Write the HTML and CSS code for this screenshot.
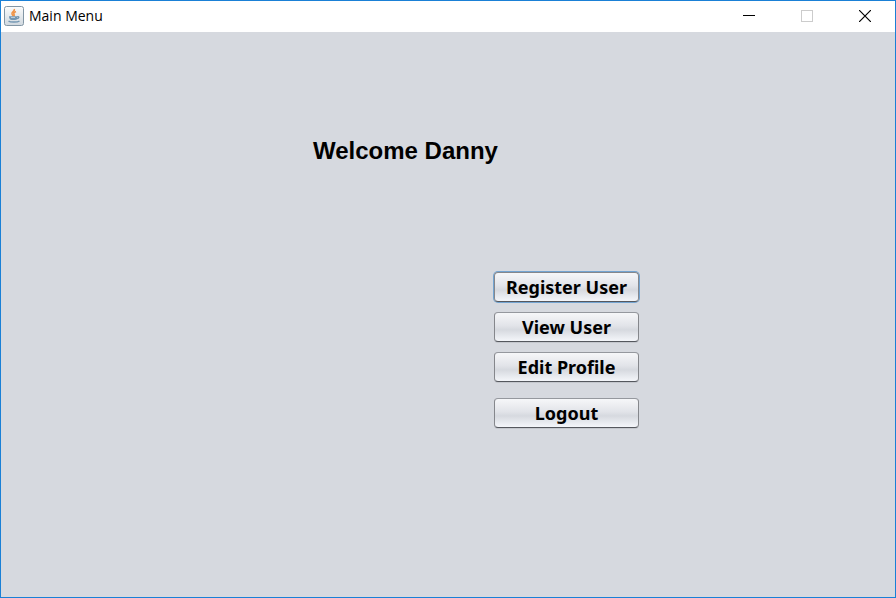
FILE: index.html
```html
<!DOCTYPE html>
<html lang="en">
<head>
<meta charset="utf-8">
<title>Main Menu</title>
<link rel="stylesheet" href="styles.css">
</head>
<body>
<div class="window">
  <header class="titlebar">
    <svg class="app-icon" width="20" height="20" viewBox="0 0 20 20" aria-hidden="true">
      <defs>
        <linearGradient id="tile" x1="0" y1="0" x2="0" y2="1">
          <stop offset="0" stop-color="#fbfcfc"/>
          <stop offset="1" stop-color="#d0d8df"/>
        </linearGradient>
      </defs>
      <rect x=".5" y=".5" width="19" height="19" rx="2" fill="url(#tile)" stroke="#8296a5"/>
      <path d="M10.300 3c.8 2-2.800 3-2.300 4.800.2.9 1 1.500 1.300 2.200M12 5.500c-1.800.8-2.700 1.700-2 2.700.5.7.3 1.300-.3 1.900" fill="none" stroke="#ef9448" stroke-width="1.600"/>
      <path d="M5 10.300h8.500c0 2.200-.8 3.700-2.200 3.700H7.700C6 14 5 12.500 5 10.300z" fill="#7396b2"/>
      <path d="M13.300 10.700c2.200-.6 2.400 1.700-.9 2.300" fill="none" stroke="#6b8fac" stroke-width="1.200"/>
      <path d="M4.500 15c1.500 1.300 9 1.500 11 0" fill="none" stroke="#7396b2" stroke-width="1.400"/>
      <path d="M7 11.500h4" stroke="#b5cbdb"/>
    </svg>
    <span class="title">Main Menu</span>
    <button class="control" type="button" aria-label="Minimize"><svg width="12" height="12" shape-rendering="crispEdges"><path d="M0 5.500h12" stroke="#000"/></svg></button>
    <button class="control" type="button" aria-label="Maximize" disabled><svg width="12" height="12" shape-rendering="crispEdges"><path d="M.5.5h11v11H.5z" fill="none" stroke="#ccc"/></svg></button>
    <button class="control" type="button" aria-label="Close"><svg width="12" height="12"><path d="M0 0l12 12M12 0L0 12" stroke="#000" stroke-width="1.200"/></svg></button>
  </header>
  <main class="content">
    <h1 class="welcome">Welcome Danny</h1>
    <nav class="menu">
      <button class="action focused" type="button">Register User</button>
      <button class="action" type="button">View User</button>
      <button class="action" type="button">Edit Profile</button>
      <button class="action logout" type="button">Logout</button>
    </nav>
  </main>
</div>
</body>
</html>
```
FILE: styles.css
```css
* {
  box-sizing: border-box;
}

body {
  margin: 0;
}

.window {
  display: flex;
  flex-direction: column;
  min-height: 100vh;
  border: 1px solid #1a80d6;
  background: #d6d9df;
}

.titlebar {
  display: flex;
  align-items: center;
  height: 31px;
  padding: 0 1px 1px 3px;
  background: #fff;
}

.title {
  flex: 1;
  margin-left: 5px;
  font: 14px/20px "Open Sans", sans-serif;
  color: #000;
}

.control {
  display: flex;
  align-items: center;
  justify-content: center;
  width: 58px;
  height: 30px;
  padding: 0;
  border: 0;
  background: none;
}

.content {
  display: grid;
  grid-template-columns: 312fr 181fr 145px 256fr;
  padding: 104px 0 40px;
}

.welcome {
  grid-column: 2 / 5;
  margin: 0;
  font: bold 24px/30px "Liberation Sans", Arial, sans-serif;
  color: #000;
}

.menu {
  display: flex;
  flex-direction: column;
  grid-column: 3;
  gap: 10px;
  margin-top: 106px;
}

.action {
  height: 30px;
  margin: 0;
  padding: 0;
  border: 1px solid #85878c;
  border-top-color: #95989e;
  border-bottom-color: #55585e;
  border-radius: 4px;
  background: linear-gradient(#f6f7f9, #e2e4e9 45%, #d6d9df 60%, #f4f6fa);
  box-shadow: 0 1px #c4c7cd;
  font: bold 18px/26px "Noto Sans", Tahoma, sans-serif;
  color: #000;
  white-space: nowrap;
}

.focused {
  border-color: #85878c;
  border-bottom-color: #55585e;
  box-shadow: 0 0 0 1px #73a4d1;
}

.logout {
  margin-top: 6px;
}
```
